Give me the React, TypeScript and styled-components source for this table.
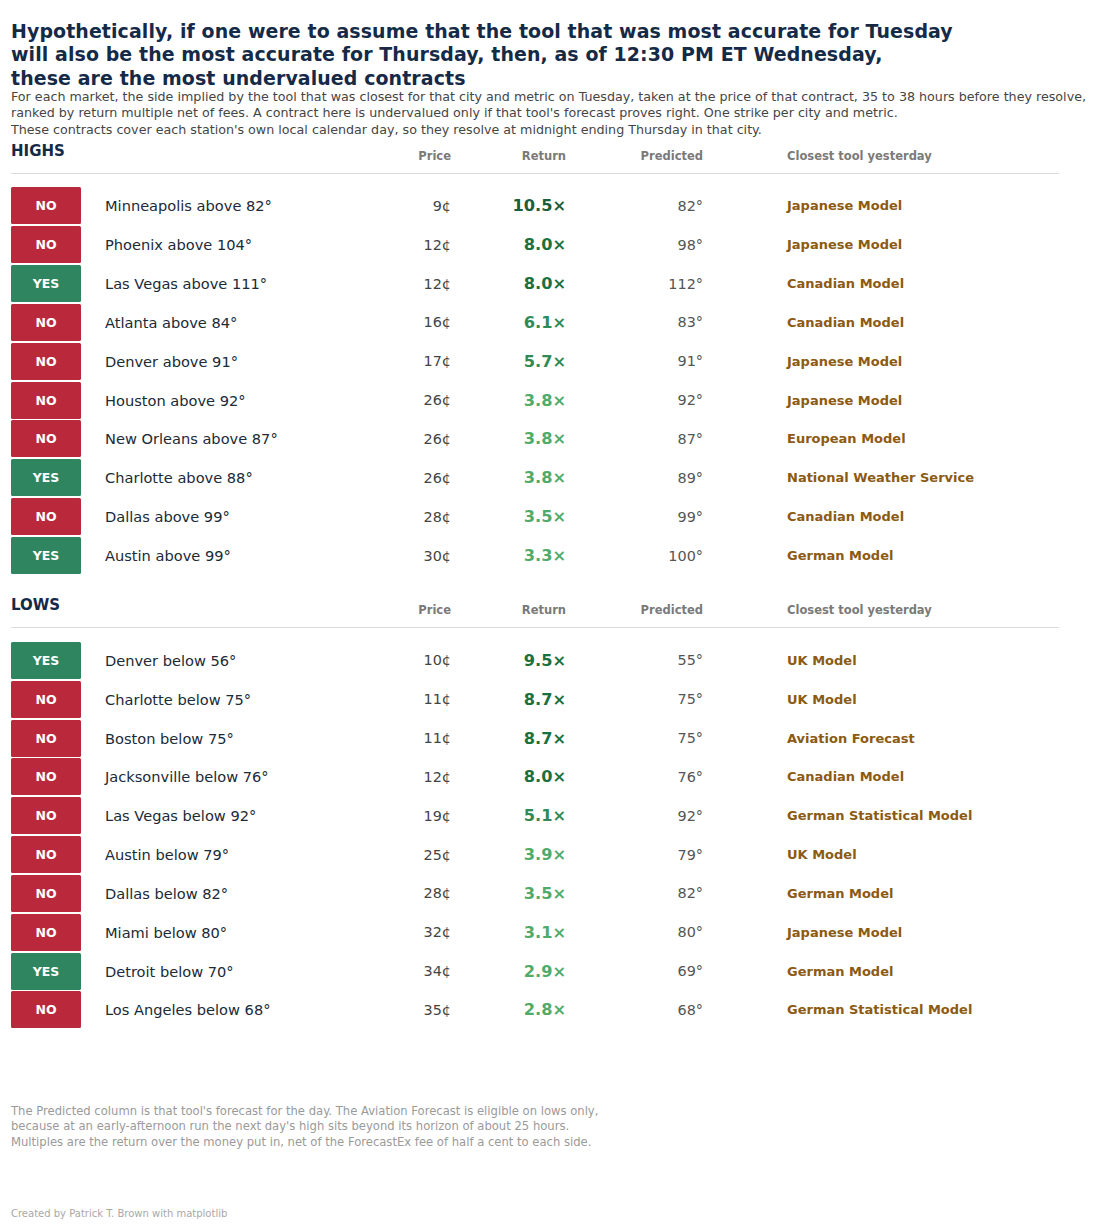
import React from "react";
import styled, { createGlobalStyle } from "styled-components";

const Global = createGlobalStyle`
  html, body { margin: 0; padding: 0; background: #ffffff; }
  body { font-family: "DejaVu Sans", "Liberation Sans", sans-serif; }
`;

type Side = "YES" | "NO";
interface Row {
  side: Side;
  name: string;
  price: string;
  ret: number;
  pred: string;
  tool: string;
}

const highs: Row[] = [
  { side: "NO", name: "Minneapolis above 82°", price: "9¢", ret: 10.5, pred: "82°", tool: "Japanese Model" },
  { side: "NO", name: "Phoenix above 104°", price: "12¢", ret: 8.0, pred: "98°", tool: "Japanese Model" },
  { side: "YES", name: "Las Vegas above 111°", price: "12¢", ret: 8.0, pred: "112°", tool: "Canadian Model" },
  { side: "NO", name: "Atlanta above 84°", price: "16¢", ret: 6.1, pred: "83°", tool: "Canadian Model" },
  { side: "NO", name: "Denver above 91°", price: "17¢", ret: 5.7, pred: "91°", tool: "Japanese Model" },
  { side: "NO", name: "Houston above 92°", price: "26¢", ret: 3.8, pred: "92°", tool: "Japanese Model" },
  { side: "NO", name: "New Orleans above 87°", price: "26¢", ret: 3.8, pred: "87°", tool: "European Model" },
  { side: "YES", name: "Charlotte above 88°", price: "26¢", ret: 3.8, pred: "89°", tool: "National Weather Service" },
  { side: "NO", name: "Dallas above 99°", price: "28¢", ret: 3.5, pred: "99°", tool: "Canadian Model" },
  { side: "YES", name: "Austin above 99°", price: "30¢", ret: 3.3, pred: "100°", tool: "German Model" },
];

const lows: Row[] = [
  { side: "YES", name: "Denver below 56°", price: "10¢", ret: 9.5, pred: "55°", tool: "UK Model" },
  { side: "NO", name: "Charlotte below 75°", price: "11¢", ret: 8.7, pred: "75°", tool: "UK Model" },
  { side: "NO", name: "Boston below 75°", price: "11¢", ret: 8.7, pred: "75°", tool: "Aviation Forecast" },
  { side: "NO", name: "Jacksonville below 76°", price: "12¢", ret: 8.0, pred: "76°", tool: "Canadian Model" },
  { side: "NO", name: "Las Vegas below 92°", price: "19¢", ret: 5.1, pred: "92°", tool: "German Statistical Model" },
  { side: "NO", name: "Austin below 79°", price: "25¢", ret: 3.9, pred: "79°", tool: "UK Model" },
  { side: "NO", name: "Dallas below 82°", price: "28¢", ret: 3.5, pred: "82°", tool: "German Model" },
  { side: "NO", name: "Miami below 80°", price: "32¢", ret: 3.1, pred: "80°", tool: "Japanese Model" },
  { side: "YES", name: "Detroit below 70°", price: "34¢", ret: 2.9, pred: "69°", tool: "German Model" },
  { side: "NO", name: "Los Angeles below 68°", price: "35¢", ret: 2.8, pred: "68°", tool: "German Statistical Model" },
];

const retColor = (v: number) => {
  if (v >= 10) return "#1c5d3a";
  if (v >= 7) return "#1a7140";
  if (v >= 5) return "#2f8a56";
  return "#4fab6c";
};

const Page = styled.div`
  width: 1100px;
  min-height: 1229px;
  box-sizing: border-box;
  padding: 19.5px 0 0 11px;
  display: flex;
  flex-direction: column;
`;

const Title = styled.h1`
  margin: 0;
  font-size: 18.95px;
  line-height: 23.5px;
  font-weight: 700;
  color: #152a47;
  letter-spacing: 0.1px;
`;

const Subtitle = styled.p`
  margin: -1.5px 0 0 0;
  font-size: 12.7px;
  line-height: 16.5px;
  color: #454545;
  white-space: nowrap;
`;

const Grid = styled.div`
  display: grid;
  grid-template-columns: 70px 299px 71px 115px 137px 356px;
  align-items: center;
  width: 1048px;
`;

const HeaderRow = styled(Grid)`
  height: 35px;
  border-bottom: 1px solid #dcdcdc;
`;

const SectionTitle = styled.div`
  grid-column: 1 / span 2;
  font-size: 15px;
  font-weight: 700;
  color: #152a47;
  margin-top: -9px;
`;

const HeadLabel = styled.div<{ $left?: boolean; $pad?: number }>`
  font-size: 11.5px;
  font-weight: 700;
  color: #7a7a7a;
  text-align: ${(p) => (p.$left ? "left" : "right")};
  padding-left: ${(p) => p.$pad ?? 0}px;
`;

const Rows = styled.div<{ $top: number }>`
  display: flex;
  flex-direction: column;
  margin-top: ${(p) => p.$top}px;
`;

const DataRow = styled(Grid)`
  height: 38.85px;
`;

const Badge = styled.div<{ $side: Side }>`
  height: 37px;
  border-radius: 1.5px;
  background: ${(p) => (p.$side === "YES" ? "#2e855f" : "#b9293b")};
  color: #ffffff;
  font-size: 12.5px;
  font-weight: 700;
  display: flex;
  align-items: center;
  justify-content: center;
`;

const Name = styled.div`
  padding-left: 24px;
  font-size: 14.6px;
  color: #202a37;
`;

const Price = styled.div`
  text-align: right;
  font-size: 14.4px;
  color: #444444;
`;

const Ret = styled.div<{ $c: string }>`
  text-align: right;
  font-size: 16.2px;
  font-weight: 700;
  color: ${(p) => p.$c};
`;

const Pred = styled.div`
  text-align: right;
  font-size: 14.4px;
  color: #555555;
`;

const Tool = styled.div`
  padding-left: 84px;
  font-size: 13px;
  font-weight: 700;
  color: #8c5a12;
`;

const Spacer = styled.div<{ $h: number }>`
  height: ${(p) => p.$h}px;
`;

const Footnote = styled.p`
  margin: 0;
  font-size: 11.6px;
  line-height: 15.5px;
  color: #9a9a9a;
`;

const Credit = styled.div`
  margin-top: 58px;
  font-size: 10px;
  color: #a8a8a8;
`;

const Section: React.FC<{ title: string; rows: Row[]; top: number }> = ({ title, rows, top }) => (
  <>
    <HeaderRow>
      <SectionTitle>{title}</SectionTitle>
      <HeadLabel>Price</HeadLabel>
      <HeadLabel>Return</HeadLabel>
      <HeadLabel>Predicted</HeadLabel>
      <HeadLabel $left $pad={84}>Closest tool yesterday</HeadLabel>
    </HeaderRow>
    <Rows $top={top}>
      {rows.map((r, i) => (
        <DataRow key={i}>
          <Badge $side={r.side}>{r.side}</Badge>
          <Name>{r.name}</Name>
          <Price>{r.price}</Price>
          <Ret $c={retColor(r.ret)}>{r.ret.toFixed(1)}×</Ret>
          <Pred>{r.pred}</Pred>
          <Tool>{r.tool}</Tool>
        </DataRow>
      ))}
    </Rows>
  </>
);

export default function App() {
  return (
    <>
      <Global />
      <Page>
        <Title>
          Hypothetically, if one were to assume that the tool that was most accurate for Tuesday
          <br />
          will also be the most accurate for Thursday, then, as of 12:30 PM ET Wednesday,
          <br />
          these are the most undervalued contracts
        </Title>
        <Subtitle>
          For each market, the side implied by the tool that was closest for that city and metric on Tuesday, taken at the price of that contract, 35 to 38 hours before they resolve,
          <br />
          ranked by return multiple net of fees. A contract here is undervalued only if that tool's forecast proves right. One strike per city and metric.
          <br />
          These contracts cover each station's own local calendar day, so they resolve at midnight ending Thursday in that city.
        </Subtitle>
        <Section title="HIGHS" rows={highs} top={12.5} />
        <Spacer $h={17.5} />
        <Section title="LOWS" rows={lows} top={12.5} />
        <Spacer $h={74.5} />
        <Footnote>
          The Predicted column is that tool's forecast for the day. The Aviation Forecast is eligible on lows only,
          <br />
          because at an early-afternoon run the next day's high sits beyond its horizon of about 25 hours.
          <br />
          Multiples are the return over the money put in, net of the ForecastEx fee of half a cent to each side.
        </Footnote>
        <Credit>Created by Patrick T. Brown with matplotlib</Credit>
      </Page>
    </>
  );
}
